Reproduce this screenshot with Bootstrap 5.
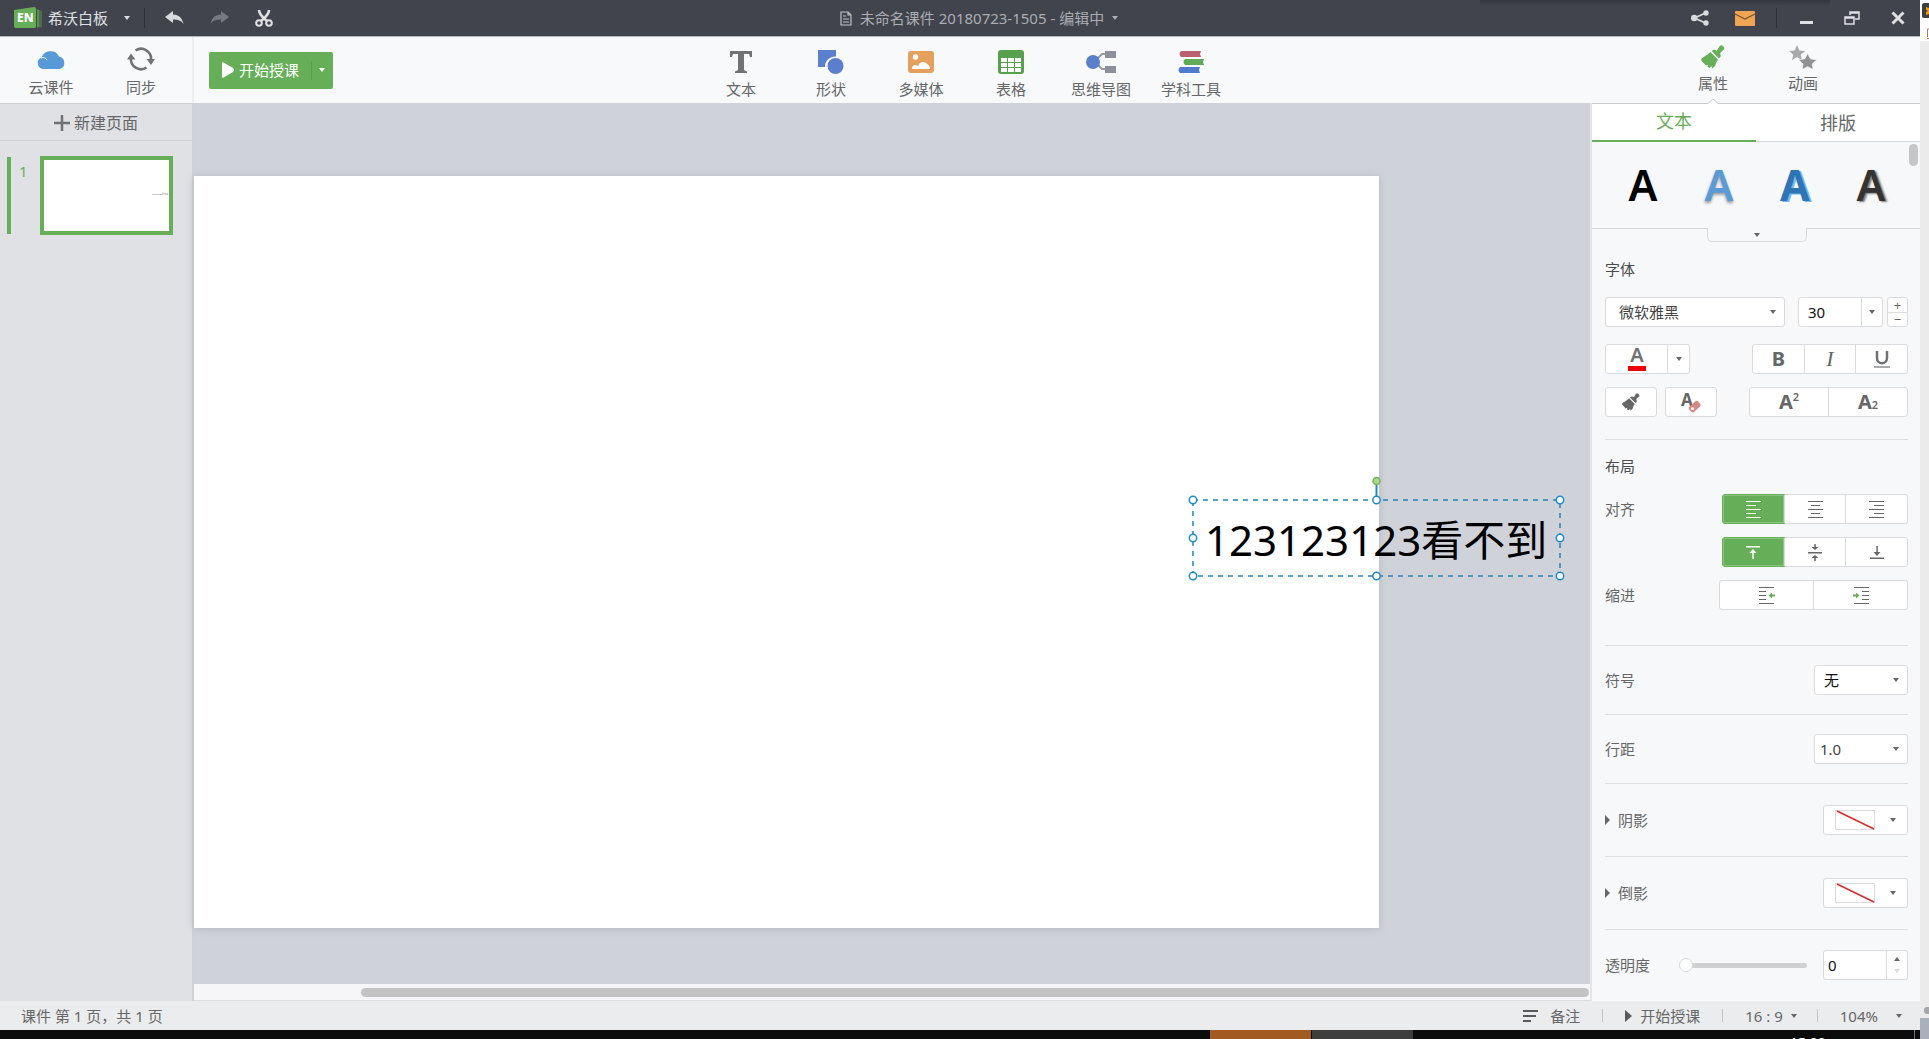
<!DOCTYPE html>
<html lang="zh-CN">
<head>
<meta charset="utf-8">
<meta name="viewport" content="width=device-width, initial-scale=1">
<title>希沃白板</title>
<link rel="stylesheet" href="https://cdn.jsdelivr.net/npm/bootstrap@5.3.0/dist/css/bootstrap.min.css">
<style>
:root{--green:#67ae58;--line:#d9dbde;--ink:#666768}
body{font-family:"Noto Sans","Noto Sans CJK SC",sans-serif;font-size:15px;line-height:20px;color:var(--ink);background:#ebebec;overflow:hidden}
button,input,select{font-family:inherit;font-size:inherit;line-height:inherit;color:inherit}
button{background:none;border:0;padding:0}
svg{display:block;flex:none;overflow:visible}
a{color:inherit;text-decoration:none}
.caret{display:inline-block;flex:none;border:3px solid transparent;border-top:4px solid currentColor;border-bottom:0}
.caret.up{border-top:0;border-bottom:4px solid currentColor}
.caret.side{border:5px solid transparent;border-left:5px solid currentColor;border-right:0}

.titlebar{display:grid;grid-template-columns:1fr auto 1fr;height:37px;background:#41444d linear-gradient(#34363e,#41444d) no-repeat right 90px top/350px 6px;color:#dfe0e3;border-bottom:1px solid #b4b7bc}
.titlebar .vr-dark{width:1px;height:20px;background:#2c2e35}
.brand-side{padding-left:14px}
.brand-side .vr-dark{margin:0 20px 0 14px}
.edit-tools{gap:26px}
.win-side{padding-right:15px}
.win-side .vr-dark{margin:0 23px 0 21px}
.win-btns{gap:31px}
.doc-name{color:#abadb3;padding-left:38px}
.tools{height:66px;background:#f7f9fb}
.tool{width:90px;height:66px;padding-top:10px;display:flex;flex-direction:column;align-items:center;gap:6px}
.tool svg{height:24px}
.tools-mid{padding-left:12px}
.tools-mid .tool{padding-top:13px;gap:5px}
.tools-left{width:194px;padding-left:6px;border-right:2px solid #eceef1}
.tools-right{width:329px;padding-left:77px}
.tools-right .tool{padding-top:8px;gap:4px;position:relative}
.tools-right .tool:first-child{color:var(--ink)}
.green-icon{color:var(--green)}
.tool .notch{position:absolute;bottom:-1px;height:6px}
.btn-start{height:37px;margin-left:15px;background:var(--green);color:#fff;border-radius:2px}
.btn-start .part{height:37px;display:flex;align-items:center}
.btn-start .drop{width:22px;position:relative;justify-content:center}
.btn-start .drop::before{content:"";position:absolute;left:0;top:9px;bottom:9px;width:1px;background:#5a9e4d}

.pages{width:194px;background:#dfe1e5;border-right:2px solid #cfd1d6;border-top:1px solid #cfd1d5}
.newpage{height:37px;font-size:16px;border-bottom:1px solid #cdd0d4;width:100%;padding-top:1px}
.page-item{padding:15px 0 0 7px}
.page-item .mark-bar{width:4px;height:77px;background:var(--green);margin-top:1px}
.page-item .num{width:25px;padding:5px 0 0 8px;color:var(--green)}
.thumb{width:133px;height:79px;border:4px solid var(--green);background:#fff;font-size:2px;line-height:4px;color:#555;padding:33px 1px 0 0;text-align:right}
.stage{background:#d0d2da;position:relative;padding-top:73px}
.slide{background:#fff;margin:0 211px 56px 0;box-shadow:0 1px 8px #b5b7bf}
.textbox{position:absolute;right:30px;top:397px;width:367px;height:76px}
.textbox span{position:absolute;left:12px;top:10px;font-size:42px;line-height:60px;color:#000;white-space:nowrap}
.textbox svg{position:absolute;left:-7px;top:-26px}
.hscroll{height:17px;background:#f6f6f8;border-bottom:1px solid #dcdddf;padding:4px 1px 4px 167px}
.hscroll div{height:9px;border-radius:5px;background:#c3c3c4}

.panel{width:330px;background:#f7f8fa;border-left:2px solid #e3e5e9}
.tabs{height:39px;background:#fff;border-top:1px solid #c8cacd;font-size:18px}
.tabs button{flex:1;border-bottom:1px solid #d4d6d9}
.tabs button.active{color:var(--green);border-bottom:2px solid var(--green);padding-bottom:2px}
.styles{height:87px;border-bottom:1px solid #d4d6d9;padding:0 10px 0 13px;position:relative}
.styles button{width:76px;font:600 43px/60px "Noto Sans",sans-serif;color:#000}
.styles button:nth-child(2){color:#5b9bd5;text-shadow:0 2px 3px #999}
.styles button:nth-child(3){color:#2e75b6;font-weight:700;text-shadow:2px 1px 0 #7ab8ee}
.styles button:nth-child(4){color:#333;text-shadow:2px 1px 2px #777}
.pscroll{position:absolute;right:2px;top:2px;width:9px;height:22px;border-radius:5px;background:#c5c6c8}
.styles .pull{position:absolute;left:115px;top:86px;width:100px;height:14px;border:1px solid var(--line);border-top:0;border-radius:0 0 5px 5px;background:#f7f8fa;display:flex;align-items:center;justify-content:center}
.props{padding:0 12px 0 13px}
.sect{border-bottom:1px solid #dddfe2;padding:19px 0}
.sect:last-child{border:0;padding:20px 0 0}
.sect.font-sect{padding:25px 0 22px}
.sect.layout-sect{padding:11px 0 35px}
.sect.fx{padding:21px 0}
.font-sect .line+.line,.layout-sect .line+.line{margin-top:13px}
.font-sect .line:nth-child(3){margin-top:17px}
.line{display:flex;align-items:center;justify-content:space-between;height:30px}
.head{color:#4b4c4e}
.ctl{height:30px;background:#fff;border:1px solid var(--line);border-radius:3px;display:flex;align-items:stretch;position:relative}
.ctl>button{flex:1;display:flex;align-items:center;justify-content:center}
.ctl>*+button{border-left:1px solid var(--line)}
.ctl .on{background:var(--green);color:#fff;outline:1px solid var(--green);box-shadow:inset 0 0 0 1px #8ac47e;border-radius:2px 0 0 2px}
.ctl>.drop{flex:0 0 21px}
.w-a>button+.drop{flex-basis:22px}
.ctl select,.ctl input{appearance:none;border:0;background:transparent;outline:0;width:100%;min-width:0;padding:0 0 0 9px;color:#111}
.ctl select+.caret{position:absolute;right:8px;top:12px;pointer-events:none}
.ctl .tight{padding-left:5px;color:#444}
.w-font{width:180px}.w-font select{padding-left:13px;color:#444}
.w-a{width:85px}.w-b{width:94px}.w-c{width:52px}.w-biu{width:156px}.w-sup{width:159px}.w-al{width:186px}.w-ind{width:189px}.w-pm{width:21px}
.ctl.w-pm{flex-direction:column}
.ctl.w-pm button{border-left:0;line-height:12px;font-size:13px}
.ctl.w-pm button+button{border-top:1px solid var(--line)}
.ctl .swatch{justify-content:flex-start;padding-left:11px;gap:15px}
.letter{font-weight:700;font-size:20px}
.letter+sup,.letter+sub{font-size:11px;font-weight:600}
.range{appearance:none;width:128px;height:14px;background:transparent;margin:0 0 0 12px}
.range::-webkit-slider-runnable-track{height:5px;border-radius:3px;background:#d0d1d3}
.range::-webkit-slider-thumb{appearance:none;width:14px;height:14px;border-radius:50%;background:#fff;border:1px solid #d8d9db;margin-top:-5px}

.status{height:29px;background:#ebeced;padding:0 18px 0 21px}
.status .bar{width:1px;height:13px;background:#c3c4c6;margin:0 22px}
.status .bar:nth-of-type(3){margin-left:20px}
.status .zoomer{gap:18px}
.taskbar{height:9px;background:#0c0c0d;display:grid;grid-template-columns:1210fr 101fr 1px 101fr 377fr 124fr 6fr;overflow:hidden}
.taskbar .clock{color:#fff;font-size:14px;line-height:20px;padding-top:3px}
.edge{width:9px;background:#ebebec;overflow:hidden}
.edge .e-top{height:41px;background:#fff;padding:3px 0 0 2px}
.edge .e-thumb{width:5px;height:7px;border-radius:3px 0 0 3px;background:#a4a6aa;margin:0 0 4px 4px}
.edge .e-end{height:21px;background:#a9b0bc}
.tk-orange{background:#a15a22}
.tk-gray{background:#3e3e3f}
.italic-i{font:italic 22px "Liberation Serif",serif}
</style>
<script src="https://cdn.jsdelivr.net/npm/bootstrap@5.3.0/dist/js/bootstrap.bundle.min.js"></script>
</head>
<body>
<svg width="0" height="0" class="position-absolute" aria-hidden="true">
  <symbol id="brush" viewBox="0 0 26 26"><path fill="currentColor" d="M20 1.500c1-1.500 2.500-1.500 3.500-.5l1 1c1 1 1 2.500-.3 3.500l-3.700 3.500.8 1.700c.3 1 0 1.800-.6 2.500l-1.200 1.300L11.500 6.500l1.700-1c.8-.5 1.700-.4 2.500 0l1.300.7z"/><path fill="currentColor" d="M10.200 7.600 18.500 16c-2 2-2.500 4-2.800 6-1 1.700-2.700 3-4.200 3.500l.7-2.700-3 2L7 23.500l.8-2.200-2.500 1L1 17.500c-1-1.300-1-2.200-.3-3 3-2 6.500-3.900 9.500-6.900z"/></symbol>
</svg>
<div class="d-flex vh-100">
<div class="d-flex flex-column flex-grow-1">

<header class="titlebar">
  <div class="brand-side d-flex align-items-center">
    <svg width="30" height="22" viewBox="0 0 30 22"><path fill="#4b6e4c" d="m23 2 5 2v16l-5 1z"/><path fill="#579252" d="m19 1 6 2v17l-6 1z"/><path fill="#41444d" d="M22 1h1v20h-1z"/><path d="M0 3 20 0q2 0 2 2v17q0 2-2 2H2q-2 0-2-2z" fill="#66ae57"/><text x="3" y="15" font-size="12" font-weight="800" fill="#fff" font-family="Noto Sans">EN</text></svg>
    <button class="ms-1">希沃白板</button><span class="caret ms-3"></span>
    <span class="vr-dark"></span>
    <div class="edit-tools d-flex align-items-center">
      <button aria-label="撤销"><svg width="19" height="14" viewBox="0 0 19 14"><path fill="#d9dadd" d="M0 6 8 0v3.500c6 0 9 3.500 10.500 9.500C16 9.500 13 8.500 8 8.500V12z"/></svg></button>
      <button aria-label="重做"><svg width="19" height="14" viewBox="0 0 19 14"><path fill="#777980" d="M19 6 11 0v3.500C5 3.500 2 7 .5 13 3 9.500 6 8.500 11 8.500V12z"/></svg></button>
      <button aria-label="剪切"><svg width="18" height="18" viewBox="0 0 18 18" fill="none" stroke="#dfe0e3" stroke-width="2"><circle cx="4" cy="14" r="2.800"/><circle cx="14" cy="14" r="2.800"/><path stroke-width="2.600" d="M4 1c0 4 3 7 8 11M14 1c0 4-3 7-8 11"/></svg></button>
    </div>
  </div>
  <button class="doc-name d-flex align-items-center gap-2"><svg width="12" height="15" viewBox="0 0 12 15" fill="none" stroke="#c0c2c6" stroke-width="1.200"><path d="M1 1h7l3 3v10H1zM8 1v3h3M3 5h3M3 8h6M3 11h6"/></svg><span>未命名课件 20180723-1505 - 编辑中</span><span class="caret"></span></button>
  <div class="win-side d-flex align-items-center justify-content-end">
    <div class="edit-tools d-flex align-items-center">
      <button aria-label="分享"><svg width="18" height="16" viewBox="0 0 18 16"><path d="m14.500 3-11 5 11 5" fill="none" stroke="#d9dadd" stroke-width="1.800"/><g fill="#d9dadd"><circle cx="15" cy="3" r="2.700"/><circle cx="3.200" cy="8" r="3.200"/><circle cx="15" cy="13" r="2.700"/></g></svg></button>
      <button aria-label="消息"><svg width="20" height="15" viewBox="0 0 20 15"><rect width="20" height="15" rx="1" fill="#f0a553"/><path d="m0 3 10 5 10-5" fill="none" stroke="#74542f" stroke-width="1.200"/></svg></button>
    </div>
    <span class="vr-dark"></span>
    <div class="win-btns d-flex align-items-center">
      <button aria-label="最小化"><svg width="13" height="15" viewBox="0 0 13 15"><path fill="#dfe0e3" d="M0 10h13v3H0z"/></svg></button>
      <button aria-label="还原"><svg width="16" height="14" viewBox="0 0 16 14" fill="none" stroke="#dfe0e3" stroke-width="1.500"><path d="M6 4V1h9v7h-4M1 6h9v7H1zM1 7h9M6 2h9"/></svg></button>
      <button aria-label="关闭"><svg width="14" height="14" viewBox="0 0 14 14"><path d="m1.500 1.500 11 11m0-11-11 11" stroke="#dfe0e3" stroke-width="3"/></svg></button>
    </div>
  </div>
</header>

<nav class="tools d-flex justify-content-between">
  <div class="d-flex align-items-center flex-fill w-25">
    <div class="tools-left d-flex">
      <button class="tool"><svg width="30" viewBox="0 0 30 24"><path fill="#5899d8" d="M7 22a6 6 0 0 1-1.500-11.500A9.500 9.500 0 0 1 23 9.500 6.500 6.500 0 0 1 24 22z"/><path d="M5 11c3-1 5 0 6 2" fill="none" stroke="#f7f9fb"/></svg>云课件</button>
      <button class="tool"><svg width="28" viewBox="0 0 28 24" fill="none" stroke="#717274" stroke-width="2.600"><path d="M8.500 3.500A10 10 0 0 1 24 13M19.500 20.500A10 10 0 0 1 4 11"/><path fill="#717274" stroke="none" d="m0 12.500 4-6 4.500 6zM19.500 12h8.500l-4 6z"/></svg>同步</button>
    </div>
    <div class="btn-start d-flex">
      <button class="part ps-2"><svg class="ms-1 me-1" width="14" height="16" viewBox="0 0 14 16"><path fill="#fff" d="M1 1q0-1 1.500-.5L12 6q2 2 0 4l-9.500 5.500Q1 16 1 15z"/></svg><span class="pe-2 me-1">开始授课</span></button>
      <button class="part drop" aria-label="授课选项"><span class="caret"></span></button>
    </div>
  </div>
  <div class="tools-mid d-flex">
    <button class="tool"><svg width="24" viewBox="0 0 24 24"><path fill="#717274" d="M1 1h22v6h-2l-1-3h-5v16l3 1.500V23H6v-1.500L9 20V4H4L3 7H1z"/></svg>文本</button>
    <button class="tool"><svg width="26" viewBox="0 0 26 24"><path fill="#5b7fcd" d="M0 0h18v6.500A10 10 0 0 0 7 17H0z"/><circle cx="17.500" cy="16" r="8" fill="#5b7fcd"/></svg>形状</button>
    <button class="tool"><svg width="26" viewBox="0 0 26 24"><rect y="1" width="26" height="22" rx="3" fill="#e5a05e"/><circle cx="7.500" cy="7" r="2.700" fill="#fff"/><path fill="#fff" d="M4 19c0-4 3-5 6-3 2-5 7-6 12 1v2z"/></svg>多媒体</button>
    <button class="tool"><svg width="26" viewBox="0 0 26 24"><rect width="26" height="24" rx="3" fill="#57a04e"/><path fill="#fff" d="M3 8h6v4H3zm7 0h6v4h-6zm7 0h6v4h-6zM3 13h6v4H3zm7 0h6v4h-6zm7 0h6v4h-6zM3 18h6v4H3zm7 0h6v4h-6zm7 0h6v4h-6z"/></svg>表格</button>
    <button class="tool"><svg width="30" viewBox="0 0 30 24"><path d="M19 4h-3l-5 5m8 10h-3l-5-5" fill="none" stroke="#9698a3" stroke-width="2"/><circle cx="7" cy="12" r="7" fill="#5b7fcd"/><path fill="#8d8f9a" d="M19 1h11v7H19zm0 15h11v7H19z"/></svg>思维导图</button>
    <button class="tool"><svg width="28" viewBox="0 0 28 24"><path fill="#bb6070" d="M4 1h20l-1 3 1 3H4q-3-3 0-6z"/><path fill="#5dab54" d="M8 9h19l-1 3 1 3H8q-3-3 0-6z"/><path fill="#527bce" d="M3 17h20l-1 3 1 3H3q-3-3 0-6z"/></svg>学科工具</button>
  </div>
  <div class="d-flex flex-fill w-25 justify-content-end">
    <div class="tools-right d-flex">
      <button class="tool"><svg width="26" height="26" class="green-icon"><use href="#brush"/></svg>属性<svg class="notch" width="12" height="6" viewBox="0 0 12 6"><path d="m0 6 6-5 6 5" fill="#fff" stroke="#c8cacd"/></svg></button>
      <button class="tool"><svg width="30" viewBox="0 0 30 26"><path fill="#a8a9ac" d="m8.500 0 2.500 6 6.500.5-5 4 1.500 6-5.500-3.500-5.500 3.500 1.500-6-4.500-4 6-.5z"/><path fill="#909195" stroke="#f7f9fb" stroke-width=".8" d="m20 9 3 6 7 1-5 4.500 1 6-6-3-6 3 1-6-5-4.500 7-1z"/></svg>动画</button>
    </div>
  </div>
</nav>

<main class="d-flex flex-grow-1">
  <aside class="pages">
    <button class="newpage d-flex align-items-center justify-content-center gap-1"><svg width="16" height="16" viewBox="0 0 16 16"><path d="M8 0v16M0 8h16" stroke="#717274" stroke-width="2.500"/></svg><span>新建页面</span></button>
    <div class="page-item d-flex"><span class="mark-bar"></span><span class="num flex-shrink-0">1</span><span class="ps-1"><span class="thumb d-block">123123123看不到</span></span></div>
  </aside>
  <section class="d-flex flex-column flex-grow-1">
    <div class="stage d-flex flex-column flex-grow-1">
      <div class="slide flex-grow-1"></div>
      <div class="textbox"><span>123123123看不到</span>
        <svg width="381" height="110" viewBox="0 0 381 110" fill="#fff" stroke="#1e8cc8" stroke-width="1.500"><rect x="7" y="26" width="367" height="76" fill="none" stroke="#2584b5" stroke-dasharray="5 5"/><path d="M190.500 10v14" stroke-width="2"/><circle cx="190.500" cy="7" r="3.500" fill="#a9d98f" stroke="#75b35c"/><circle cx="7" cy="26" r="3.700"/><circle cx="190.500" cy="26" r="3.700"/><circle cx="374" cy="26" r="3.700"/><circle cx="7" cy="64" r="3.700"/><circle cx="374" cy="64" r="3.700"/><circle cx="7" cy="102" r="3.700"/><circle cx="190.500" cy="102" r="3.700"/><circle cx="374" cy="102" r="3.700"/></svg>
      </div>
    </div>
    <div class="hscroll"><div></div></div>
  </section>
  <aside class="panel">
    <div class="tabs d-flex"><button class="active">文本</button><button>排版</button></div>
    <div class="styles d-flex align-items-center"><button>A</button><button>A</button><button>A</button><button>A</button><span class="pscroll"></span><span class="pull"><span class="caret"></span></span></div>
    <div class="props">
      <div class="sect font-sect">
        <div class="line head">字体</div>
        <div class="line"><div class="ctl w-font"><select aria-label="字体"><option>微软雅黑</option></select><span class="caret"></span></div>
          <div class="d-flex gap-1"><div class="ctl w-a"><input aria-label="字号" value="30"><button class="drop" aria-label="选择字号"><span class="caret"></span></button></div><div class="ctl w-pm"><button>+</button><button>−</button></div></div></div>
        <div class="line"><div class="ctl w-a"><button aria-label="文字颜色"><svg width="20" height="26" viewBox="0 0 20 26"><text x="10" y="16" text-anchor="middle" font-size="20" font-weight="600" fill="#707173">A</text><path fill="#f00000" d="M1 20h18v5H1z"/></svg></button><button class="drop" aria-label="选择颜色"><span class="caret"></span></button></div>
          <div class="ctl w-biu"><button class="letter">B</button><button class="italic-i">I</button><button aria-label="下划线"><svg width="18" height="20" viewBox="0 0 18 20" fill="none" stroke="#717274" stroke-width="2.500"><path d="M4 2v7c0 7 10 7 10 0V2"/><path stroke-width="1.200" d="M1 18h16"/></svg></button></div></div>
        <div class="line"><div class="d-flex gap-2"><div class="ctl w-c"><button aria-label="格式刷"><svg width="18" height="18"><use href="#brush"/></svg></button></div><div class="ctl w-c"><button aria-label="清除格式"><svg width="22" height="22" viewBox="0 0 22 22"><text x="1" y="15" font-size="17" font-weight="700" fill="#666">A</text><rect x="9" y="12" width="12" height="7" rx="2" transform="rotate(-42 15 16)" fill="#d98782"/><circle cx="12.500" cy="17.500" r="1.500" fill="#fff"/></svg></button></div></div>
          <div class="ctl w-sup"><button><span class="letter">A</span><sup>2</sup></button><button><span class="letter">A</span><sub>2</sub></button></div></div>
      </div>
      <div class="sect layout-sect">
        <div class="line head">布局</div>
        <div class="line"><span>对齐</span><div class="ctl w-al"><button class="on" aria-label="左对齐"><svg width="15" height="17" stroke="currentColor"><path d="M0 .5h15M0 4.500h10M0 8.500h15M0 12.500h10M0 16.500h15"/></svg></button><button aria-label="居中"><svg width="15" height="17" stroke="currentColor"><path d="M0 .5h15M3 4.500h9M0 8.500h15M3 12.500h9M0 16.500h15"/></svg></button><button aria-label="右对齐"><svg width="15" height="17" stroke="currentColor"><path d="M0 .5h15M5 4.500h10M0 8.500h15M5 12.500h10M0 16.500h15"/></svg></button></div></div>
        <div class="line justify-content-end"><div class="ctl w-al"><button class="on" aria-label="顶端对齐"><svg width="14" height="13" fill="currentColor"><path d="M0 0h14v1.500H0zM6.300 6h1.500v7H6.300zM3.500 7 7 3l3.500 4z"/></svg></button><button aria-label="垂直居中"><svg width="14" height="17" fill="currentColor"><path d="M0 8h14v1.500H0zM6.300 0h1.500v3h2.700L7 6 3.500 3h2.800zM6.300 17h1.500v-3h2.700L7 11l-3.500 3h2.800z"/></svg></button><button aria-label="底端对齐"><svg width="14" height="13" fill="currentColor"><path d="M0 11.500h14V13H0zM6.300 0h1.500v6h2.700L7 10 3.500 6h2.800z"/></svg></button></div></div>
        <div class="line"><span>缩进</span><div class="ctl w-ind"><button aria-label="减少缩进"><svg width="16" height="17" stroke="currentColor"><path d="M0 .5h15M0 4.500h7M0 8.500h7M0 12.500h7M0 16.500h15"/><path d="M9.500 8.500 13 5.500v2h3v2h-3v2z" fill="#67ae58" stroke="none"/></svg></button><button aria-label="增加缩进"><svg width="16" height="17" stroke="currentColor"><path d="M1 .5h15M9 4.500h7M9 8.500h7M9 12.500h7M1 16.500h15"/><path d="M6.500 8.500 3 5.500v2H0v2h3v2z" fill="#67ae58" stroke="none"/></svg></button></div></div>
      </div>
      <div class="sect"><div class="line"><label for="sym">符号</label><div class="ctl w-b"><select id="sym"><option>无</option></select><span class="caret"></span></div></div></div>
      <div class="sect"><div class="line"><label for="lh">行距</label><div class="ctl w-b"><select id="lh" class="tight"><option>1.0</option></select><span class="caret"></span></div></div></div>
      <div class="sect fx"><div class="line"><a href="#" class="d-flex align-items-center gap-2"><span class="caret side"></span>阴影</a><div class="ctl w-a"><button class="swatch" aria-label="阴影样式"><svg width="40" height="20"><rect x=".5" y=".5" width="39" height="19" fill="#fff" stroke="#d9dbde"/><path d="m2 1 37 18" stroke="#dc2a2a" stroke-width="1.500"/></svg><span class="caret"></span></button></div></div></div>
      <div class="sect fx"><div class="line"><a href="#" class="d-flex align-items-center gap-2"><span class="caret side"></span>倒影</a><div class="ctl w-a"><button class="swatch" aria-label="倒影样式"><svg width="40" height="20"><rect x=".5" y=".5" width="39" height="19" fill="#fff" stroke="#d9dbde"/><path d="m2 1 37 18" stroke="#dc2a2a" stroke-width="1.500"/></svg><span class="caret"></span></button></div></div></div>
      <div class="sect"><div class="line"><label for="op">透明度</label><input id="op" class="range" type="range" value="0"><div class="ctl w-a"><input class="px-1" aria-label="透明度数值" value="0"><button class="drop d-flex flex-column gap-2" aria-label="调节透明度"><span class="caret up"></span><span class="caret opacity-25"></span></button></div></div></div>
    </div>
  </aside>
</main>

<footer class="status d-flex align-items-center justify-content-between">
  <span>课件 第 1 页，共 1 页</span>
  <div class="d-flex align-items-center">
    <button class="d-flex align-items-center gap-2"><svg class="me-1" width="15" height="12" viewBox="0 0 15 12"><path d="M0 1h15M0 6h13M0 11h8" stroke="#58595b" stroke-width="2"/></svg>备注</button>
    <span class="bar"></span>
    <button class="d-flex align-items-center gap-2"><svg width="7" height="12" viewBox="0 0 7 12"><path fill="#58595b" d="m0 0 7 6-7 6z"/></svg>开始授课</button>
    <span class="bar"></span>
    <button class="d-flex align-items-center gap-2">16 : 9 <span class="caret"></span></button>
    <span class="bar"></span>
    <button class="zoomer d-flex align-items-center">104%<span class="caret"></span></button>
  </div>
</footer>
<div class="taskbar"><i></i><i class="tk-orange"></i><i></i><i class="tk-gray"></i><i></i><span class="clock">15:00</span><i class="border-start border-secondary"></i></div>
</div>
<div class="edge d-flex flex-column">
  <div class="e-top"><svg width="7" height="36" viewBox="0 0 7 36"><path fill="#3e3e40" d="M0 2q0-2 2-2h5v15H2q-2 0-2-2z"/><path fill="#f59a10" d="m4 4 3 1v6l-3 1V9l2-1-2-1z"/><path d="M7 26H5.500v8M5 35.500h2" fill="none" stroke="#c07850"/></svg></div>
  <div class="flex-grow-1"></div><div class="e-thumb"></div><div class="e-end"></div>
</div>
</div>
</body>
</html>
